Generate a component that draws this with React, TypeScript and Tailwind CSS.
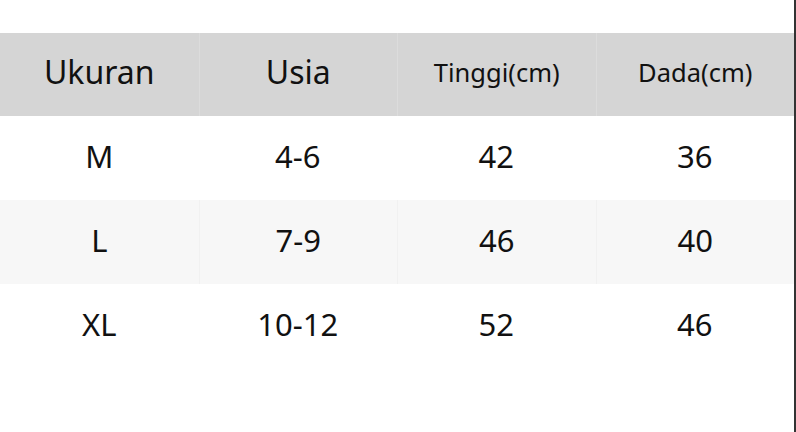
const HEADERS = [
  { label: "Ukuran", size: "text-[32px]" },
  { label: "Usia", size: "text-[32px]" },
  { label: "Tinggi(cm)", size: "text-[25.5px]" },
  { label: "Dada(cm)", size: "text-[25.5px]" },
];

const ROWS = [
  ["M", "4-6", "42", "36"],
  ["L", "7-9", "46", "40"],
  ["XL", "10-12", "52", "46"],
];

export default function App() {
  return (
    <div className="flex h-[432px] w-[796px] bg-white font-['Noto_Sans',sans-serif] text-[#111]">
      <div className="flex w-[794px] flex-col pt-[33px]">
        {/* header */}
        <div className="grid h-[83px] grid-cols-4 bg-[#d5d5d5]">
          {HEADERS.map((h, i) => (
            <div
              key={h.label}
              className={`flex items-center justify-center pb-[5px] ${h.size} ${i > 0 ? "border-l border-[#dcdcdc]" : ""}`}
            >
              {h.label}
            </div>
          ))}
        </div>

        {ROWS.map((row, r) => (
          <div
            key={row[0]}
            className={`grid h-[84px] grid-cols-4 ${r === 1 ? "bg-[#f7f7f7]" : "bg-white"}`}
          >
            {row.map((cell, i) => (
              <div
                key={i}
                className={`flex items-center justify-center pb-[4px] text-[31px] ${i > 0 && r === 1 ? "border-l border-[#f1f1f1]" : ""}`}
              >
                {cell}
              </div>
            ))}
          </div>
        ))}
      </div>
      <div className="w-[2px] bg-[#333]" />
    </div>
  );
}
